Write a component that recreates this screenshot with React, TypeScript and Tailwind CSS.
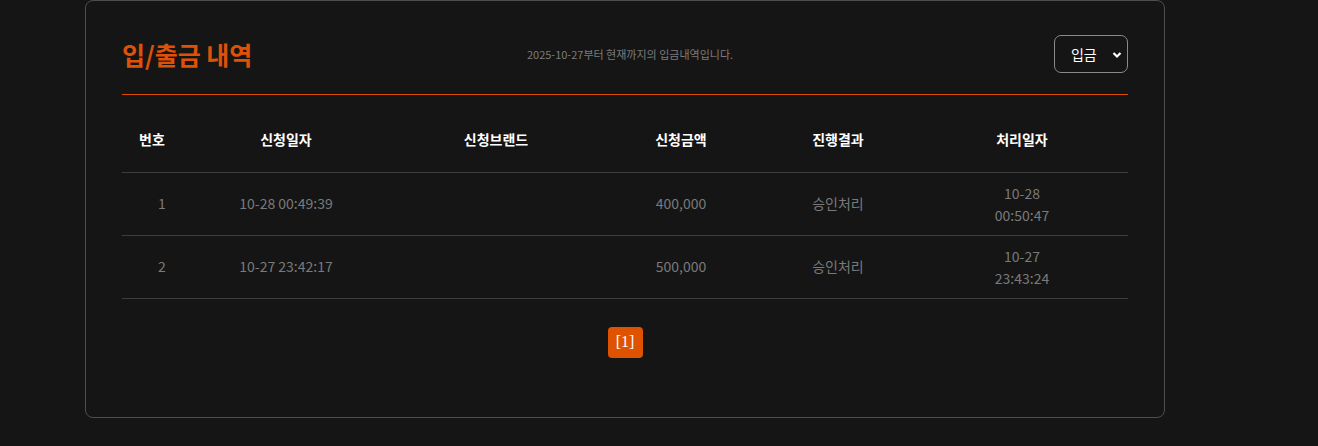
import React from "react";

type Row = {
  no: number;
  requestedAt: string;
  brand: string;
  amount: string;
  status: string;
  doneDate: string;
  doneTime: string;
};

const rows: Row[] = [
  {
    no: 1,
    requestedAt: "10-28 00:49:39",
    brand: "",
    amount: "400,000",
    status: "승인처리",
    doneDate: "10-28",
    doneTime: "00:50:47",
  },
  {
    no: 2,
    requestedAt: "10-27 23:42:17",
    brand: "",
    amount: "500,000",
    status: "승인처리",
    doneDate: "10-27",
    doneTime: "23:43:24",
  },
];

const headers = ["번호", "신청일자", "신청브랜드", "신청금액", "진행결과", "처리일자"];

function TypeSelect() {
  return (
    <div className="relative">
      <select
        defaultValue="deposit"
        className="h-[38px] w-[74px] appearance-none rounded-[7px] border border-[#8a8a8a] bg-[#151515] pl-4 text-[14px] text-white outline-none"
      >
        <option value="deposit">입금</option>
        <option value="withdraw">출금</option>
      </select>
      <svg
        className="pointer-events-none absolute right-[6px] top-[16px] h-[8px] w-[10px]"
        viewBox="0 0 10 8"
        fill="none"
      >
        <path d="M1.5 2l3.5 3.5L8.5 2" stroke="white" strokeWidth="2.2" />
      </svg>
    </div>
  );
}

export default function App() {
  return (
    <div className="min-h-[446px] bg-[#151515] font-['Noto_Sans_CJK_KR','Noto_Sans',sans-serif]">
      <div className="ml-[85px] w-[1080px] rounded-[8px] border border-[#4e4e4e] bg-[#151515] px-[36px] pb-[59px] pt-[34px]">
        <div className="flex items-center justify-between border-b border-b-[#d94e00] pb-[21px]">
          <h2 className="w-[260px] text-[25px] font-bold leading-[38px] text-[#e05108]">
            입/출금 내역
          </h2>
          <p className="ml-[10px] text-[11px] text-[#7c7c7c]">
            2025-10-27부터 현재까지의 입금내역입니다.
          </p>
          <div className="flex w-[260px] justify-end">
            <TypeSelect />
          </div>
        </div>

        <table className="mt-4 w-full table-fixed border-collapse text-[14px]">
          <colgroup>
            <col className="w-[60px]" />
            <col className="w-[208px]" />
            <col className="w-[212px]" />
            <col className="w-[158px]" />
            <col className="w-[156px]" />
            <col className="w-[212px]" />
          </colgroup>
          <thead>
            <tr className="border-b border-[#3d3d3d]">
              {headers.map((h) => (
                <th key={h} className="h-[61px] pb-1 text-center font-bold text-white">
                  {h}
                </th>
              ))}
            </tr>
          </thead>
          <tbody>
            {rows.map((r) => (
              <tr key={r.no} className="border-b border-[#3d3d3d] text-[#7a7a7a]">
                <td className="h-[63px] pl-5 text-center">{r.no}</td>
                <td className="text-center">{r.requestedAt}</td>
                <td className="text-center">{r.brand}</td>
                <td className="text-center">{r.amount}</td>
                <td className="text-center">{r.status}</td>
                <td className="text-center leading-[22px]">
                  {r.doneDate}
                  <br />
                  {r.doneTime}
                </td>
              </tr>
            ))}
          </tbody>
        </table>

        <div className="mt-[28px] flex justify-center">
          <button className="flex h-[31px] w-[35px] items-center justify-center rounded-[4px] bg-[#df5200] font-['Liberation_Serif',serif] text-[16px] text-white">
            [1]
          </button>
        </div>
      </div>
    </div>
  );
}
